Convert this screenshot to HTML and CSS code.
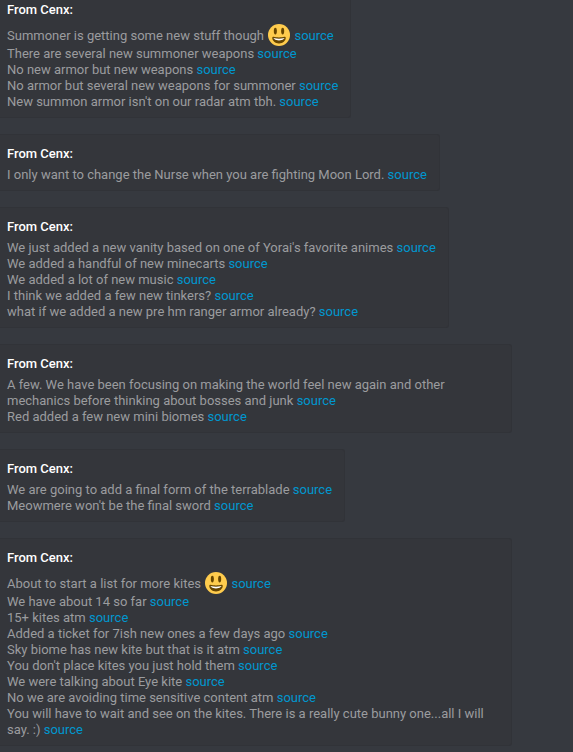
FILE: index.html
```
<!DOCTYPE html>
<html lang="en">
<head>
    <meta charset="UTF-8">
    <meta name="viewport" content="width=device-width, initial-scale=1.0">
    <title>From Cenx</title>
    <link rel="stylesheet" href="styles.css">
</head>
<body>
    <svg class="sprite" aria-hidden="true">
        <symbol id="smiley" viewBox="0 0 36 36">
            <circle cx="18" cy="18" r="18" fill="#ffcc4d"/>
            <ellipse cx="12" cy="11.5" rx="2.5" ry="5.5" fill="#664500"/>
            <ellipse cx="24" cy="11.5" rx="2.5" ry="5.5" fill="#664500"/>
            <path fill="#664500" d="M18 22c-3.600 0-6-.4-9-1-.7-.1-2 0-2 2 0 4 4.600 9 11 9s11-5 11-9c0-2-1.300-2.100-2-2-3 .6-5.400 1-9 1z"/>
            <path fill="#fff" d="M9 23s3 1 9 1 9-1 9-1-2 4-9 4-9-4-9-4z"/>
        </symbol>
    </svg>
    <main class="feed">
        <article class="embed embed-cut">
            <h2>From Cenx:</h2>
            <p>Summoner is getting some new stuff though <svg class="emoji" role="img" aria-label="smiley"><use href="#smiley"/></svg> <a href="#">source</a></p>
            <p>There are several new summoner weapons <a href="#">source</a></p>
            <p>No new armor but new weapons <a href="#">source</a></p>
            <p>No armor but several new weapons for summoner <a href="#">source</a></p>
            <p>New summon armor isn't on our radar atm tbh. <a href="#">source</a></p>
        </article>
        <article class="embed">
            <h2>From Cenx:</h2>
            <p>I only want to change the Nurse when you are fighting Moon Lord. <a href="#">source</a></p>
        </article>
        <article class="embed">
            <h2>From Cenx:</h2>
            <p>We just added a new vanity based on one of Yorai's favorite animes <a href="#">source</a></p>
            <p>We added a handful of new minecarts <a href="#">source</a></p>
            <p>We added a lot of new music <a href="#">source</a></p>
            <p>I think we added a few new tinkers? <a href="#">source</a></p>
            <p>what if we added a new pre hm ranger armor already? <a href="#">source</a></p>
        </article>
        <article class="embed">
            <h2>From Cenx:</h2>
            <p>A few. We have been focusing on making the world feel new again and other mechanics before thinking about bosses and junk <a href="#">source</a></p>
            <p>Red added a few new mini biomes <a href="#">source</a></p>
        </article>
        <article class="embed">
            <h2>From Cenx:</h2>
            <p>We are going to add a final form of the terrablade <a href="#">source</a></p>
            <p>Meowmere won't be the final sword <a href="#">source</a></p>
        </article>
        <article class="embed">
            <h2>From Cenx:</h2>
            <p>About to start a list for more kites <svg class="emoji" role="img" aria-label="smiley"><use href="#smiley"/></svg> <a href="#">source</a></p>
            <p>We have about 14 so far <a href="#">source</a></p>
            <p>15+ kites atm <a href="#">source</a></p>
            <p>Added a ticket for 7ish new ones a few days ago <a href="#">source</a></p>
            <p>Sky biome has new kite but that is it atm <a href="#">source</a></p>
            <p>You don't place kites you just hold them <a href="#">source</a></p>
            <p>We were talking about Eye kite <a href="#">source</a></p>
            <p>No we are avoiding time sensitive content atm <a href="#">source</a></p>
            <p>You will have to wait and see on the kites. There is a really cute bunny one...all I will say. :) <a href="#">source</a></p>
        </article>
    </main>
</body>
</html>
```

FILE: styles.css
```
body {
    margin: 0;
    background-color: #36393f;
    color: #9b9c9f;
    font-family: Roboto, 'Open Sans', sans-serif;
    font-size: 13px;
    line-height: 16px;
}
.sprite {
    display: none;
}
.feed {
    display: flex;
    flex-direction: column;
    align-items: flex-start;
    gap: 16px;
}
.embed {
    box-sizing: border-box;
    max-width: 512px;
    padding: 10px 12px 7px 7px;
    background-color: #34363b;
    border: 1px solid #313338;
    border-left: 0;
    border-radius: 0 3px 3px 0;
}
.embed-cut {
    padding-top: 1px;
    border-top: 0;
    border-top-right-radius: 0;
}
.embed h2 {
    margin: 0 0 4px;
    color: #fff;
    font-size: 13px;
    font-weight: 500;
    line-height: 18px;
}
.embed p {
    margin: 0;
}
.embed a {
    color: #0096cf;
    text-decoration: none;
}
.embed a:hover {
    text-decoration: underline;
}
.emoji {
    width: 22px;
    height: 22px;
    margin: 1px 1px 0;
    vertical-align: -6px;
}
```
